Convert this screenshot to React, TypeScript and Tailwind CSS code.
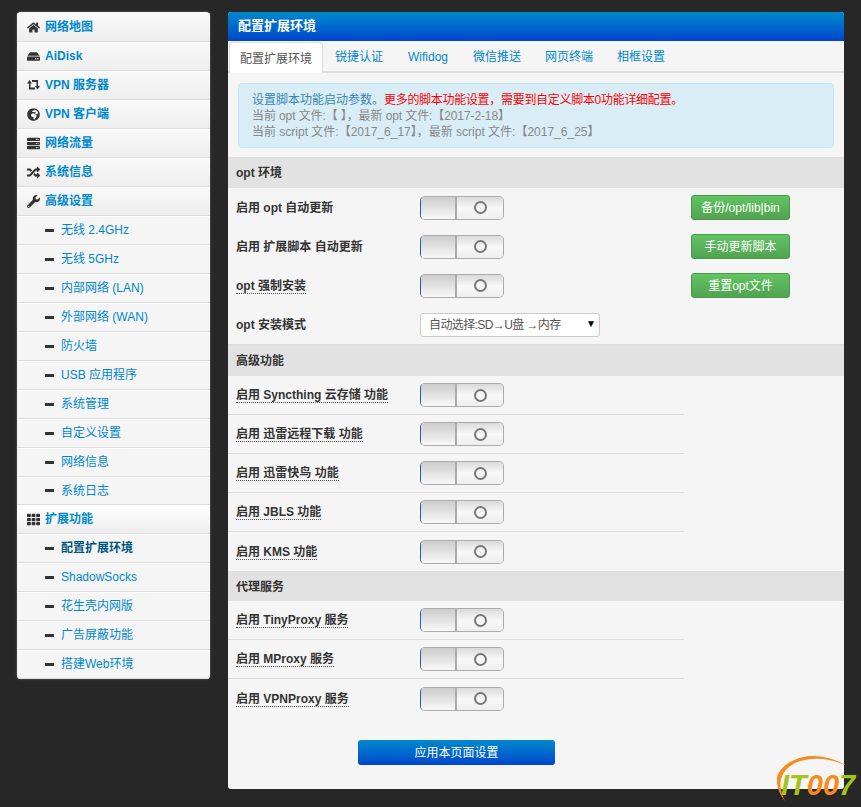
import React from "react";
import {
  FaHome,
  FaHdd,
  FaGlobeAfrica,
  FaServer,
  FaRandom,
  FaWrench,
  FaTh,
} from "react-icons/fa";

const fontFamily = "font-['Liberation_Sans','Noto_Sans_CJK_SC',sans-serif]";

// boxier than FaRetweet, closer to the glyph in the picture
function RetweetIcon({ className }: { className?: string }) {
  return (
    <svg className={className} width="13" height="10" viewBox="0 0 13 10" fill="currentColor">
      <path d="M2 3.5h-2L2.5 0 5 3.5H3.5V7.5H8V9.5H2Z" />
      <path d="M5 0H11V6H13L10.5 9.5 8 6H9.5V2H5Z" />
    </svg>
  );
}

const topMenu = [
  { icon: FaHome, label: "网络地图" },
  { icon: FaHdd, label: "AiDisk" },
  { icon: RetweetIcon, label: "VPN 服务器" },
  { icon: FaGlobeAfrica, label: "VPN 客户端" },
  { icon: FaServer, label: "网络流量" },
  { icon: FaRandom, label: "系统信息" },
  { icon: FaWrench, label: "高级设置" },
];

const advancedMenu = [
  "无线 2.4GHz",
  "无线 5GHz",
  "内部网络 (LAN)",
  "外部网络 (WAN)",
  "防火墙",
  "USB 应用程序",
  "系统管理",
  "自定义设置",
  "网络信息",
  "系统日志",
];

const extMenu = ["配置扩展环境", "ShadowSocks", "花生壳内网版", "广告屏蔽功能", "搭建Web环境"];

const tabs = ["配置扩展环境", "锐捷认证", "Wifidog", "微信推送", "网页终端", "相框设置"];

function MainItem({ icon: Icon, label, active }: { icon: React.ElementType; label: string; active?: boolean }) {
  return (
    <div
      className={`flex h-[29px] items-center border-b border-[#dddddd] pl-[7px] shadow-[inset_0_1px_0_#ffffff] ${
        active ? "bg-gradient-to-b from-white to-[#eeeeee]" : "bg-gradient-to-b from-[#f9f9f9] to-[#eeeeee]"
      }`}
    >
      <span className="flex w-[18px] justify-center">
        <Icon className="text-[13px] text-[#333333]" />
      </span>
      <span className="ml-[3px] text-[12px] font-bold text-[#0088cc]">{label}</span>
    </div>
  );
}

function SubItem({ label, current, short }: { label: string; current?: boolean; short?: boolean }) {
  return (
    <div
      className={`flex items-center border-b border-[#dddddd] bg-[#f5f5f5] pl-[28px] shadow-[inset_0_1px_0_#ffffff] ${
        short ? "h-[28px]" : "h-[29px]"
      }`}
    >
      <span className="h-[3px] w-[9px] bg-[#333333]" />
      <span className={`ml-[7px] text-[12px] ${current ? "font-bold text-[#005580]" : "text-[#0088cc]"}`}>
        {label}
      </span>
    </div>
  );
}

function Toggle() {
  return (
    <div className="flex h-[24px] w-[84px] overflow-hidden rounded-[5px] border border-[#ababab] border-l-[#2f5f96] bg-white">
      <div className="w-[36px] border-r-2 border-[#aaaaaa] bg-gradient-to-b from-[#cccccc] to-[#f8f8f8]" />
      <div className="flex flex-1 items-center justify-center bg-gradient-to-b from-[#dadada] via-[#f8f8f8] to-[#eeeeee]">
        <span className="h-[13px] w-[13px] rounded-full border-2 border-[#777777]" />
      </div>
    </div>
  );
}

function SectionHead({ title, height }: { title: string; height: string }) {
  return (
    <div className={`flex items-center border-t border-[#dddddd] bg-[#e2e2e2] px-[8px] text-[12px] font-bold text-[#333333] ${height}`}>
      {title}
    </div>
  );
}

function ToggleRow({ label }: { label: string }) {
  return (
    <div className="flex h-[39px] w-[456px] items-center border-b border-[#dddddd] last:border-b-0">
      <span className="ml-[8px] w-[184px] text-[12px] font-bold text-[#333333]">
        <span className="border-b border-dotted border-[#555555]">{label}</span>
      </span>
      <Toggle />
    </div>
  );
}

function GreenButton({ label }: { label: string }) {
  return (
    <div className="flex h-[25px] w-[99px] items-center justify-center rounded-[3px] border border-[#4a9a4a] bg-gradient-to-b from-[#62c462] to-[#51a351] text-[12px] text-white">
      {label}
    </div>
  );
}

function OptRow({ label, button, hint }: { label: string; button: string; hint?: boolean }) {
  return (
    <div className="flex h-[39px] items-center">
      <span className="ml-[8px] w-[184px] text-[12px] font-bold text-[#333333]">
        <span className={hint ? "border-b border-dotted border-[#555555]" : ""}>{label}</span>
      </span>
      <Toggle />
      <div className="ml-[187px]">
        <GreenButton label={button} />
      </div>
    </div>
  );
}

function Logo() {
  return (
    <svg className="absolute bottom-[4px] right-[4px]" width="84" height="50" viewBox="0 0 84 50">
      <path
        d="M74 13 C60 4 42 1 30 4 C14 8 3 18 4 28 C4 36 8 43 12 48 C9 42 6 34 8 26 C11 16 20 9 32 7 C46 4 62 7 74 13 Z"
        fill="#f68b1f"
      />
      <text x="8" y="42" fontFamily="Liberation Sans, sans-serif" fontSize="29" fontWeight="700" fontStyle="italic">
        <tspan fill="#a4c41c">IT</tspan>
        <tspan fill="#f68b1f">00</tspan>
        <tspan fill="#a4c41c">7</tspan>
      </text>
    </svg>
  );
}

export default function App() {
  return (
    <div className={`relative flex h-[807px] w-[861px] items-start overflow-hidden bg-[#272727] pl-[17px] pt-[12px] ${fontFamily}`}>
      <aside className="h-[667px] w-[193px] overflow-hidden rounded-[4px] bg-[#f5f5f5] pt-px shadow-[0_0_2px_rgba(255,255,255,0.4)]">
        {topMenu.map((item) => (
          <MainItem key={item.label} icon={item.icon} label={item.label} />
        ))}
        {advancedMenu.map((label, i) => (
          <SubItem key={label} label={label} short={i === advancedMenu.length - 1} />
        ))}
        <MainItem icon={FaTh} label="扩展功能" active />
        {extMenu.map((label, i) => (
          <SubItem key={label} label={label} current={i === 0} />
        ))}
      </aside>

      <main className="ml-[18px] h-[777px] w-[616px] overflow-hidden rounded-[3px] bg-[#f5f5f5]">
        <div className="flex h-[29px] items-center bg-gradient-to-b from-[#0088cc] to-[#0044cc] pb-[2px] pl-[10px] text-[13px] font-bold text-white">
          配置扩展环境
        </div>

        <div className="flex h-[32px] items-end border-b-2 border-[#dddddd] pl-px">
          {tabs.map((tab, i) => (
            <div
              key={tab}
              className={
                i === 0
                  ? "-mb-[2px] flex h-[31px] items-center rounded-t-[4px] border border-b-0 border-[#dddddd] bg-white px-[10px] pt-[1px] text-[12px] text-[#555555]"
                  : `flex h-[30px] items-center px-[12px] pt-[2px] text-[12px] text-[#0088cc] ${tab === "Wifidog" ? "mx-px" : ""}`
              }
            >
              {tab}
            </div>
          ))}
        </div>

        <div className="mx-[10px] mt-[10px] h-[65px] rounded-[4px] border border-[#bce8f1] bg-[#d9edf7] pl-[13px] pt-[8px] text-[12px] leading-[16px] text-[#888888]">
          <div>
            <span className="text-[#3a87ad]">设置脚本功能启动参数。</span>
            <span className="tracking-[-0.3px] text-[#ff0000]">更多的脚本功能设置，需要到自定义脚本0功能详细配置。</span>
          </div>
          <div className="tracking-[-0.1px]">当前 opt 文件:【 】，最新 opt 文件:【2017-2-18】</div>
          <div>当前 script 文件:【2017_6_17】，最新 script 文件:【2017_6_25】</div>
        </div>

        <div className="mt-[9px]">
          <SectionHead title="opt 环境" height="h-[31px]" />
          <OptRow label="启用 opt 自动更新" button="备份/opt/lib|bin" />
          <OptRow label="启用 扩展脚本 自动更新" button="手动更新脚本" />
          <OptRow label="opt 强制安装" button="重置opt文件" hint />
          <div className="flex h-[39px] items-center">
            <span className="ml-[8px] w-[184px] text-[12px] font-bold text-[#333333]">opt 安装模式</span>
            <div className="relative">
              <select className="block h-[24px] w-[180px] appearance-none rounded-[3px] border border-[#cccccc] bg-white pl-[8px] text-[12px] tracking-[-0.6px] text-[#555555]">
                <option>自动选择:SD→U盘 →内存</option>
              </select>
              <span className="pointer-events-none absolute right-[4px] top-[4px] text-[10px] leading-[14px] text-black">▼</span>
            </div>
          </div>

          <SectionHead title="高级功能" height="h-[32px]" />
          <div>
            <ToggleRow label="启用 Syncthing 云存储 功能" />
            <ToggleRow label="启用 迅雷远程下载 功能" />
            <ToggleRow label="启用 迅雷快鸟 功能" />
            <ToggleRow label="启用 JBLS 功能" />
            <ToggleRow label="启用 KMS 功能" />
          </div>

          <SectionHead title="代理服务" height="h-[30px]" />
          <div>
            <ToggleRow label="启用 TinyProxy 服务" />
            <ToggleRow label="启用 MProxy 服务" />
            <ToggleRow label="启用 VPNProxy 服务" />
          </div>
        </div>

        <div className="ml-[130px] mt-[22px] flex h-[25px] w-[197px] items-center justify-center rounded-[3px] bg-gradient-to-b from-[#0088cc] to-[#0044cc] text-[12px] text-white">
          应用本页面设置
        </div>
      </main>

      <Logo />
    </div>
  );
}
